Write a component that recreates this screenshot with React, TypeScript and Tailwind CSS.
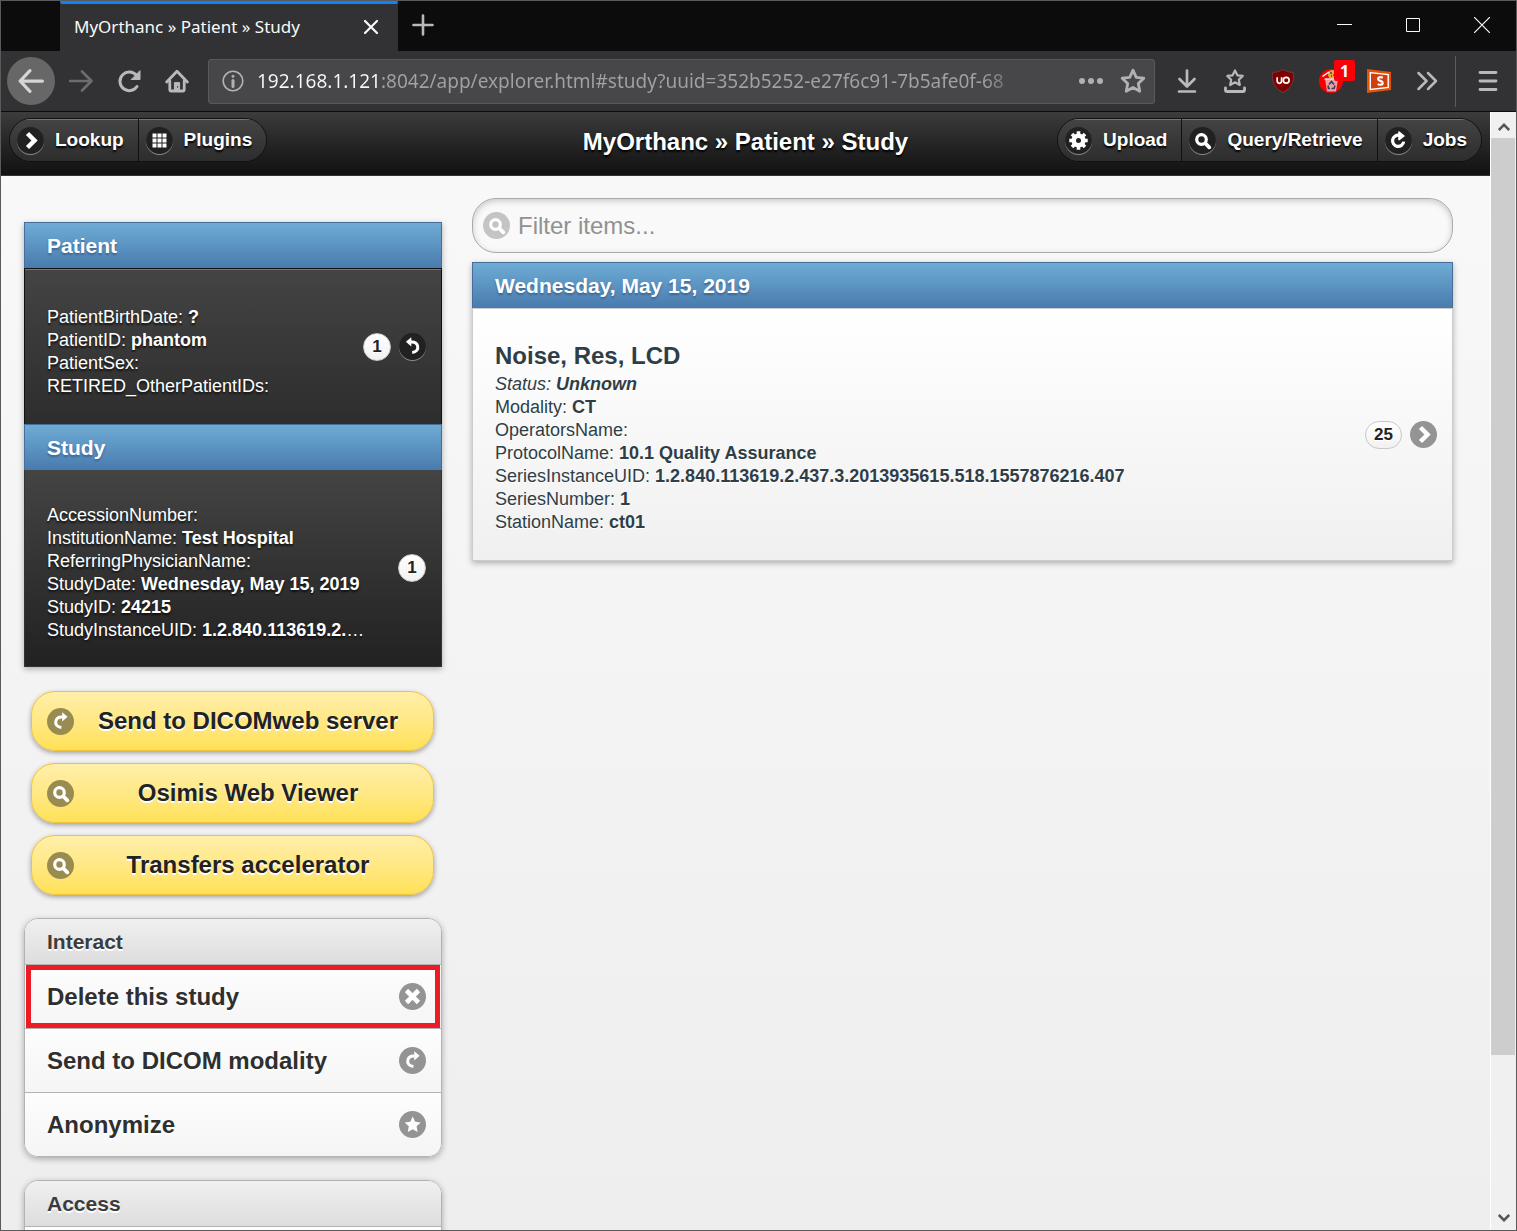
import { useState } from 'react';
import type { ReactNode } from 'react';

type Field = { label: string; value?: string };

const patientFields: Field[] = [
  { label: 'PatientBirthDate:', value: '?' },
  { label: 'PatientID:', value: 'phantom' },
  { label: 'PatientSex:' },
  { label: 'RETIRED_OtherPatientIDs:' },
];

const studyFields: Field[] = [
  { label: 'AccessionNumber:' },
  { label: 'InstitutionName:', value: 'Test Hospital' },
  { label: 'ReferringPhysicianName:' },
  { label: 'StudyDate:', value: 'Wednesday, May 15, 2019' },
  { label: 'StudyID:', value: '24215' },
];

const seriesFields: Field[] = [
  { label: 'Modality:', value: 'CT' },
  { label: 'OperatorsName:' },
  { label: 'ProtocolName:', value: '10.1 Quality Assurance' },
  { label: 'SeriesInstanceUID:', value: '1.2.840.113619.2.437.3.2013935615.518.1557876216.407' },
  { label: 'SeriesNumber:', value: '1' },
  { label: 'StationName:', value: 'ct01' },
];

const glyphs: Record<string, ReactNode> = {
  right: <path d="M10.500 6.500l7 7-7 7" fill="none" stroke="currentColor" strokeWidth="4.500" />,
  grid: (
    <path
      d="M6.500 6.500h4v4h-4zM11.500 6.500h4v4h-4zM16.500 6.500h4v4h-4zM6.500 11.500h4v4h-4zM11.500 11.500h4v4h-4zM16.500 11.500h4v4h-4zM6.500 16.500h4v4h-4zM11.500 16.500h4v4h-4zM16.500 16.500h4v4h-4z"
      fill="currentColor"
    />
  ),
  gear: (
    <g fill="none" stroke="currentColor">
      <circle cx="13.500" cy="13.500" r="4.800" strokeWidth="4.600" />
      <path
        d="M13.500 4.300v3M13.500 19.700v3M4.300 13.500h3M19.700 13.500h3M7 7l2.200 2.200M17.800 17.800l2.200 2.200M7 20l2.200-2.200M17.800 9.200L20 7"
        strokeWidth="3.600"
      />
    </g>
  ),
  search: (
    <g fill="none" stroke="currentColor" strokeLinecap="round">
      <circle cx="12.500" cy="12.500" r="4.800" strokeWidth="3.200" />
      <path d="M16.500 16.500l3.800 3.800" strokeWidth="3.800" />
    </g>
  ),
  refresh: (
    <g>
      <path d="M18.700 14.600a5.600 5.600 0 1 1-4.200-6.200" fill="none" stroke="currentColor" strokeWidth="3.200" />
      <path d="M13.200 4.500h1.400l5.400 4.500-5.400 4.200h-1.400z" fill="currentColor" />
    </g>
  ),
  forward: (
    <g>
      <path d="M14.400 19.400c-4.200-.3-6.400-3-5.500-6.500.8-2.800 3-4.200 6.600-3.900" fill="none" stroke="currentColor" strokeWidth="3" />
      <path d="M15.200 4.300l5.400 4.500-5.400 4.600z" fill="currentColor" />
    </g>
  ),
  back: (
    <g>
      <path d="M12 9c3.600-.3 5.800 1.100 6.600 3.900.9 3.500-1.200 6.200-5.400 6.500" fill="none" stroke="currentColor" strokeWidth="3" />
      <path d="M12.300 4.300L6.900 8.800l5.400 4.600z" fill="currentColor" />
    </g>
  ),
  delete: <path d="M7.500 7.500l12 12M19.500 7.500l-12 12" stroke="currentColor" strokeWidth="4.600" />,
  star: (
    <path
      d="M13.700 5.500l2.400 5.200 5.600.7-4.100 3.900 1 5.700-4.900-2.700-4.900 2.700 1-5.700-4.100-3.900 5.600-.7z"
      fill="currentColor"
    />
  ),
};

const discTones = {
  black: 'bg-[#212121] shadow-[0_1px_0_#8a8a8a]',
  gray: 'bg-[#949494]',
  olive: 'bg-[#998c50]',
  light: 'bg-[#c4c4c4]',
};

function Disc({ name, tone }: { name: string; tone: keyof typeof discTones }) {
  return (
    <span className={`block size-[27px] shrink-0 rounded-full text-white ${discTones[tone]}`}>
      <svg viewBox="0 0 27 27" className="size-full" aria-hidden="true">
        {glyphs[name]}
      </svg>
    </span>
  );
}

function Count({ children }: { children: ReactNode }) {
  return (
    <span className="flex h-7 min-w-7 items-center justify-center rounded-[14px] border border-[#c8c8c8] bg-linear-to-b from-white to-[#f1f1f1] px-2 text-[17px] leading-5 font-bold text-[#222] [text-shadow:0_1px_0_#fff]">
      {children}
    </span>
  );
}

function Fields({ items }: { items: Field[] }) {
  return items.map((f) => (
    <p key={f.label} className="truncate">
      {f.label} {f.value && <strong>{f.value}</strong>}
    </p>
  ));
}

function BlueDivider({ children }: { children: ReactNode }) {
  return (
    <h2 className="h-[46px] border border-b-0 border-[#456f9a] bg-linear-to-b from-[#6facd5] to-[#497bae] px-[22px] text-[21px] leading-[46px] font-bold text-white [text-shadow:0_2px_2px_#3e6790]">
      {children}
    </h2>
  );
}

function GrayDivider({ children }: { children: ReactNode }) {
  return (
    <h2 className="h-[45px] bg-linear-to-b from-[#f0f0f0] to-[#ddd] px-[22px] text-[21px] leading-[46px] font-bold text-[#3c3c3c] [text-shadow:0_2px_0_#fff]">
      {children}
    </h2>
  );
}

function ActionRow({ label, icon, marked = false }: { label: string; icon: string; marked?: boolean }) {
  return (
    <li className="relative border-t border-[#b3b3b3]">
      <a
        href="#study"
        className="flex h-[63px] items-center justify-between bg-linear-to-b from-[#fdfdfd] to-[#f5f5f5] pr-[15px] pl-[22px] text-2xl font-bold text-[#2f2f2f] [text-shadow:0_2px_0_#fff]"
      >
        {label}
        <Disc name={icon} tone="gray" />
      </a>
      {marked && <div className="pointer-events-none absolute inset-x-px inset-y-0 border-5 border-[#ed1c24]" />}
    </li>
  );
}

function YellowButton({ label, icon }: { label: string; icon: string }) {
  return (
    <button className="flex h-15 w-full items-center rounded-[24px] border border-[#f0c33c] bg-linear-to-b from-[#ffefaa] to-[#ffe155] pr-[15px] pl-[15px] text-2xl font-bold text-[#222] shadow-[0_2px_5px_rgba(0,0,0,0.35)] [text-shadow:0_2px_0_#fff]">
      <Disc name={icon} tone="olive" />
      <span className="flex-1 pl-1">{label}</span>
    </button>
  );
}

function HeaderButton({ label, icon }: { label: string; icon: string }) {
  return (
    <button className="flex h-[42px] items-center gap-[11px] bg-linear-to-b from-[#444] to-[#2d2d2d] pr-[14px] pl-[7px] text-[19px] font-bold text-white shadow-[inset_0_1px_0_#777] [text-shadow:0_2px_2px_#000]">
      <Disc name={icon} tone="black" />
      {label}
    </button>
  );
}

function ToolButton({
  label,
  className = 'text-[#b9b9ba]',
  children,
}: {
  label: string;
  className?: string;
  children: ReactNode;
}) {
  return (
    <button aria-label={label} className={`flex size-12 shrink-0 items-center justify-center ${className}`}>
      {children}
    </button>
  );
}

const lineIcon = {
  viewBox: '0 0 24 24',
  className: 'size-6',
  fill: 'none',
  stroke: 'currentColor',
  strokeWidth: 3,
  strokeLinecap: 'round',
  strokeLinejoin: 'round',
} as const;

function TabStrip() {
  return (
    <div className="flex h-[50px] shrink-0 bg-[#0c0c0c] pl-[59px] text-[#f9f9fa]">
      <div className="flex w-[338px] items-center justify-between border-x border-t-3 border-x-[#323234] border-t-[#0a84ff] bg-[#323234] pr-3 pb-[2px] pl-[13px] text-[17px]">
        <span>MyOrthanc » Patient » Study</span>
        <button aria-label="Close tab" className="flex size-7 items-center justify-center">
          <svg viewBox="0 0 16 16" className="size-4" stroke="currentColor" strokeWidth="2.200" strokeLinecap="round">
            <path d="M2 2l12 12M14 2L2 14" />
          </svg>
        </button>
      </div>
      <button aria-label="New tab" className="flex w-[50px] items-center justify-center pb-[2px] text-[#b9b9ba]">
        <svg viewBox="0 0 22 22" className="size-[22px]" stroke="currentColor" strokeWidth="2.600" strokeLinecap="round">
          <path d="M11 1.500v19M1.500 11h19" />
        </svg>
      </button>
      <div className="ml-auto flex pb-[2px]">
        <button aria-label="Minimize" className="flex w-[69px] items-center justify-center">
          <svg viewBox="0 0 16 16" className="size-4" stroke="currentColor">
            <path d="M1 7.500h15" />
          </svg>
        </button>
        <button aria-label="Maximize" className="flex w-[69px] items-center justify-center">
          <svg viewBox="0 0 16 16" className="size-4" fill="none" stroke="currentColor">
            <path d="M1.500 1.500h13v13h-13z" />
          </svg>
        </button>
        <button aria-label="Close window" className="flex w-[69px] items-center justify-center">
          <svg viewBox="0 0 16 16" className="size-4" stroke="currentColor" strokeWidth="1.200">
            <path d="M0 0l16 16M16 0L0 16" />
          </svg>
        </button>
      </div>
    </div>
  );
}

function Toolbar() {
  const [url, setUrl] = useState('192.168.1.121:8042/app/explorer.html#study?uuid=352b5252-e27f6c91-7b5afe0f-68');

  return (
    <div className="flex h-[61px] shrink-0 items-center border-b border-[#0c0c0d] bg-[#323234] pl-[6px]">
      <ToolButton label="Back" className="mr-[2px] rounded-full bg-[#676768] text-[#d5d5d6]">
        <svg {...lineIcon} className="size-[26px]">
          <path d="M22.500 12H2M11 2.500L2 12l9 9.500" />
        </svg>
      </ToolButton>
      <ToolButton label="Forward" className="text-[#6d6d6e]">
        <svg {...lineIcon} strokeWidth={2.600}>
          <path d="M1 12h21.500M13 2.500l9.500 9.500-9.500 9.500" />
        </svg>
      </ToolButton>
      <ToolButton label="Reload">
        <svg {...lineIcon}>
          <path d="M20 17.500A9.300 9.300 0 1 1 19.500 6.500" />
          <path d="M23 2v8.500h-8.500z" fill="currentColor" strokeWidth="1" />
        </svg>
      </ToolButton>
      <ToolButton label="Home">
        <svg {...lineIcon}>
          <path d="M1.700 13L12 2.200 22.300 13" strokeWidth="2.800" />
          <path d="M4.800 12v8.500q0 1.500 1.500 1.500h11.400q1.500 0 1.500-1.500V12" strokeWidth="2.800" />
          <path d="M9.400 22v-8.400h5.200V22z" fill="currentColor" strokeWidth="1" />
          <path d="M12.600 17.500v.6" stroke="#323234" strokeWidth="1.200" />
        </svg>
      </ToolButton>
      <div className="ml-[7px] flex h-[45px] min-w-0 flex-1 items-center rounded-[3px] border border-[#5a5a5c] bg-[#474749] pr-2 pl-[13px]">
        <svg viewBox="0 0 22 22" className="size-[22px] shrink-0 text-[#b1b1b2]" fill="none" stroke="currentColor">
          <circle cx="11" cy="11" r="9.800" strokeWidth="1.600" />
          <path d="M11 10.500v6" strokeWidth="3" strokeLinecap="round" />
          <circle cx="11" cy="6.300" r="1.100" fill="currentColor" />
        </svg>
        <input
          type="text"
          aria-label="Address"
          value={url}
          onChange={(e) => setUrl(e.target.value)}
          className="ml-[13px] min-w-0 flex-1 bg-linear-[to_right,#f9f9fa_124px,#a2a2a3_124px,#a2a2a3_calc(100%-44px),transparent] bg-clip-text text-[19px] text-transparent outline-none"
        />
        <button aria-label="Page actions" className="ml-[51px] text-[#b1b1b2]">
          <svg viewBox="0 0 26 26" className="size-[26px]" fill="currentColor">
            <circle cx="4" cy="13" r="3" />
            <circle cx="13" cy="13" r="3" />
            <circle cx="22" cy="13" r="3" />
          </svg>
        </button>
        <button aria-label="Bookmark this page" className="ml-4 text-[#b1b1b2]">
          <svg {...lineIcon} className="size-[26px]" strokeWidth={2.600}>
            <path d="M12 2l3 6.600 7 .8-5.100 4.900 1.300 7.200-6.200-3.500-6.200 3.500 1.300-7.200L2 9.400l7-.8z" />
          </svg>
        </button>
      </div>
      <div className="ml-2 flex">
        <ToolButton label="Downloads">
          <svg {...lineIcon} strokeWidth={2.700}>
            <path d="M12 1.500v15.500M4.500 10l7.500 7.500 7.500-7.500M4 22.500h16" />
          </svg>
        </ToolButton>
        <ToolButton label="Bookmarks">
          <svg {...lineIcon} strokeWidth={2.200}>
            <path d="M12 1.500l2.400 4.800 5.300.6-3.900 3.800 1 5.300-4.800-2.700L7.200 16l1-5.300-3.900-3.800 5.300-.6z" />
            <path d="M2.500 18.800v2.200q0 1.500 1.500 1.500h16q1.500 0 1.500-1.500v-2.200" strokeWidth="2.800" />
          </svg>
        </ToolButton>
        <ToolButton label="uBlock Origin">
          <svg viewBox="0 0 24 24" className="size-6" fill="none">
            <path
              d="M12 .5c3 1.800 6 2.800 10.500 3 .6 9-1.500 15.500-10.500 20C3 19 .9 12.500 1.500 3.500 6 3.300 9 2.300 12 .5z"
              fill="#800000"
              stroke="#6b3a3c"
            />
            <path d="M6.200 8.200v3.900q0 2.200 2.200 2.200t2.200-2.200V8.200" stroke="#fff" strokeWidth="1.700" />
            <circle cx="15.200" cy="11.200" r="2.900" stroke="#fff" strokeWidth="1.700" />
          </svg>
        </ToolButton>
        <ToolButton label="Cookie cleaner, 1 item" className="relative">
          <svg viewBox="0 0 24 24" className="size-6" fill="none">
            <circle cx="12" cy="12" r="12" fill="#f80000" />
            <circle cx="13.500" cy="5.500" r="4.500" fill="#e8a83c" />
            <path d="M11 4h2M14 6h2M12 7h1" stroke="#6d4110" strokeWidth="1.300" />
            <path d="M3.500 7.500L10 3" stroke="#fff" strokeWidth="1.500" />
            <path d="M6 10h13l-2 12.500H8z" fill="#e9a0a6" />
            <path d="M5.500 10h14" stroke="#ddd" strokeWidth="1.500" />
            <path
              d="M10 15.500l2.500-3 2.500 3M16 16.500l-1 3h-2.500M11 19.500H9.500l-.5-3"
              stroke="#35405e"
              strokeWidth="1.600"
            />
          </svg>
          <span className="absolute top-[3px] right-0 flex h-[21px] w-[21px] items-center justify-center rounded-[2px] bg-[#fb0008] text-base font-bold text-white">
            1
          </span>
        </ToolButton>
        <ToolButton label="Extension">
          <svg viewBox="0 0 24 24" className="size-6">
            <path d="M0 0l24 3v18L0 24z" fill="#e35208" />
            <path d="M3.300 3.600l17.900 2v12.800L3.300 20.400z" fill="#d0400a" stroke="#fff" strokeWidth="1.400" />
            <path
              d="M15.800 8.700c-1.500-.7-4.700-.9-4.700 1.200 0 2.300 4.600 1.600 4.600 4 0 2.300-3.300 2.100-5 1.200"
              fill="none"
              stroke="#fff"
              strokeWidth="2.200"
            />
          </svg>
        </ToolButton>
        <ToolButton label="More tools">
          <svg {...lineIcon} strokeWidth={2.500}>
            <path d="M3.500 4l8 8-8 8M13 4l8 8-8 8" />
          </svg>
        </ToolButton>
      </div>
      <div className="ml-1 h-[51px] w-px bg-[#5c5c5d]" />
      <ToolButton label="Menu" className="mr-1 ml-2 text-[#b9b9ba]">
        <svg {...lineIcon} strokeWidth={2.800}>
          <path d="M4 3.500h16M4 12h16M4 20.500h16" />
        </svg>
      </ToolButton>
    </div>
  );
}

function PageHeader() {
  return (
    <header className="grid h-16 grid-cols-[1fr_auto_1fr] border-b border-[#333] bg-linear-to-b from-[#3c3c3c] to-[#111] px-2 pt-[6px]">
      <nav className="flex h-11 divide-x divide-[#111] justify-self-start overflow-hidden rounded-[22px] border border-[#111]">
        <HeaderButton label="Lookup" icon="right" />
        <HeaderButton label="Plugins" icon="grid" />
      </nav>
      <h1 className="text-2xl leading-12 font-bold text-white [text-shadow:0_2px_2px_#000]">MyOrthanc » Patient » Study</h1>
      <nav className="flex h-11 divide-x divide-[#111] justify-self-end overflow-hidden rounded-[22px] border border-[#111]">
        <HeaderButton label="Upload" icon="gear" />
        <HeaderButton label="Query/Retrieve" icon="search" />
        <HeaderButton label="Jobs" icon="refresh" />
      </nav>
    </header>
  );
}

function Sidebar() {
  return (
    <aside className="mt-6">
      <section className="text-lg leading-[23px] text-white shadow-[0_2px_6px_rgba(0,0,0,0.3)] [text-shadow:0_2px_2px_#111]">
        <BlueDivider>Patient</BlueDivider>
        <a
          href="#patient"
          className="flex items-center justify-between border border-b-0 border-[#111] bg-linear-to-b from-[#444] to-[#2d2d2d] pr-[15px] pl-[22px] shadow-[inset_0_1px_0_#777]"
        >
          <div className="min-w-0 pt-[37px] pb-[26px]">
            <Fields items={patientFields} />
          </div>
          <div className="flex items-center gap-2">
            <Count>1</Count>
            <Disc name="back" tone="black" />
          </div>
        </a>
        <BlueDivider>Study</BlueDivider>
        <div className="flex items-center justify-between border border-t-0 border-[#333] bg-linear-to-b from-[#444] to-[#222] pr-[15px] pl-[22px]">
          <div className="min-w-0 pt-[34px] pb-6">
            <Fields items={studyFields} />
            <p className="truncate">
              StudyInstanceUID: <strong>1.2.840.113619.2.</strong>…
            </p>
          </div>
          <Count>1</Count>
        </div>
      </section>

      <div className="mt-6 mr-2 mb-[23px] ml-[7px] flex flex-col gap-3">
        <YellowButton label="Send to DICOMweb server" icon="forward" />
        <YellowButton label="Osimis Web Viewer" icon="search" />
        <YellowButton label="Transfers accelerator" icon="search" />
      </div>

      <ul className="overflow-hidden rounded-[14px] border border-[#b3b3b3] shadow-[0_2px_6px_rgba(0,0,0,0.3)]">
        <li>
          <GrayDivider>Interact</GrayDivider>
        </li>
        <ActionRow label="Delete this study" icon="delete" marked />
        <ActionRow label="Send to DICOM modality" icon="forward" />
        <ActionRow label="Anonymize" icon="star" />
      </ul>

      <ul className="mt-[23px] overflow-hidden rounded-t-[14px] border border-[#b3b3b3] shadow-[0_2px_6px_rgba(0,0,0,0.3)]">
        <li>
          <GrayDivider>Access</GrayDivider>
        </li>
        <li className="h-16 border-t border-[#b3b3b3] bg-[#fdfdfd]" />
      </ul>
    </aside>
  );
}

function SeriesList() {
  const [filter, setFilter] = useState('');

  return (
    <main className="min-w-0">
      <label className="flex h-[55px] items-center gap-2 rounded-[24px] border border-[#aaa] bg-[#f9f9f9] px-[10px] shadow-[inset_0_2px_6px_rgba(0,0,0,0.2)]">
        <Disc name="search" tone="light" />
        <input
          type="text"
          aria-label="Filter items"
          placeholder="Filter items..."
          value={filter}
          onChange={(e) => setFilter(e.target.value)}
          className="min-w-0 flex-1 bg-transparent text-2xl text-[#333] outline-none placeholder:text-[#919191]"
        />
      </label>
      <section className="mt-[9px] text-[#2f3e46] shadow-[0_2px_6px_rgba(0,0,0,0.3)]">
        <BlueDivider>Wednesday, May 15, 2019</BlueDivider>
        <a
          href="#series"
          className="flex items-center justify-between border border-[#ccc] bg-linear-to-b from-white to-[#f0f0f0] pr-[15px] pl-[22px] text-lg leading-[23px] [text-shadow:0_1px_0_#fff]"
        >
          <div className="min-w-0 pt-[30px] pb-[26px]">
            <h3 className="text-2xl leading-[34px] font-bold">Noise, Res, LCD</h3>
            <p className="italic">
              Status: <strong>Unknown</strong>
            </p>
            <Fields items={seriesFields} />
          </div>
          <div className="flex items-center gap-2">
            <Count>25</Count>
            <Disc name="right" tone="gray" />
          </div>
        </a>
      </section>
    </main>
  );
}

function ScrollBar() {
  return (
    <div className="flex w-[26px] shrink-0 flex-col border-l border-white bg-[#f0f0f0] text-[#555]">
      <button aria-label="Scroll up" className="flex h-[26px] items-center justify-center pt-1">
        <svg viewBox="0 0 12 8" className="h-2 w-3" fill="none" stroke="currentColor" strokeWidth="2.500">
          <path d="M.8 7L6 1.800 11.200 7" />
        </svg>
      </button>
      <div className="mr-px flex-[917] bg-[#cdcdcd]" />
      <div className="flex-[149]" />
      <button aria-label="Scroll down" className="flex h-[26px] items-center justify-center pt-[2px]">
        <svg viewBox="0 0 12 8" className="h-2 w-3" fill="none" stroke="currentColor" strokeWidth="2.500">
          <path d="M.8 1L6 6.200 11.200 1" />
        </svg>
      </button>
    </div>
  );
}

export default function App() {
  return (
    <div className="flex h-screen flex-col overflow-hidden border border-[#5a5a5a] bg-[#0c0c0c] font-['Noto_Sans',sans-serif]">
      <TabStrip />
      <Toolbar />
      <div className="flex min-h-0 flex-1 font-['Liberation_Sans',Arial,sans-serif]">
        <div className="min-w-0 flex-1 overflow-hidden bg-linear-to-b from-[#f9f9f9] to-[#eee]">
          <PageHeader />
          <div className="grid grid-cols-[418px_minmax(0,1fr)] gap-[30px] pt-[22px] pr-[37px] pl-[23px]">
            <Sidebar />
            <SeriesList />
          </div>
        </div>
        <ScrollBar />
      </div>
    </div>
  );
}
